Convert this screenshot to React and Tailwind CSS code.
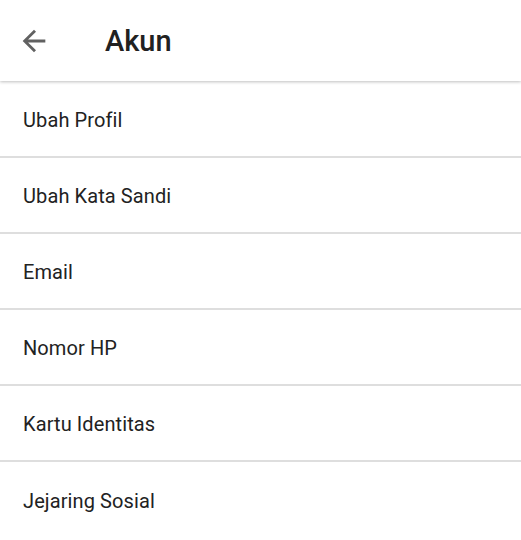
import React from "react";

const items = ["Ubah Profil", "Ubah Kata Sandi", "Email", "Nomor HP", "Kartu Identitas", "Jejaring Sosial"];

export default function App() {
  return (
    <div className="w-[521px] h-[540px] bg-white overflow-hidden" style={{ fontFamily: "Roboto, 'Liberation Sans', sans-serif" }}>
      <div className="relative z-10 h-[81px] bg-white flex items-center shadow-[0_1px_3px_rgba(0,0,0,0.25)]">
        <div className="w-[34px] h-[34px] ml-[17px] mt-[1px] flex items-center justify-center">
          <svg width="34" height="34" viewBox="0 0 24 24" fill="#616161">
            <path d="M20 11H7.83l5.59-5.59L12 4l-8 8 8 8 1.41-1.41L7.83 13H20v-2z" />
          </svg>
        </div>
        <div className="ml-[54px] text-[29px] font-medium text-[#212121] leading-none mt-[1px]">Akun</div>
      </div>
      <div className="pt-[1px]">
        {items.map((t, i) => (
          <div key={t} className={`h-[76px] flex items-center pl-[23px] text-[20px] text-[#222222] ${i < items.length - 1 ? "border-b-2 border-[#dedede]" : ""}`}>
            <span className="mt-[1px] tracking-[0.1px]">{t}</span>
          </div>
        ))}
      </div>
    </div>
  );
}
